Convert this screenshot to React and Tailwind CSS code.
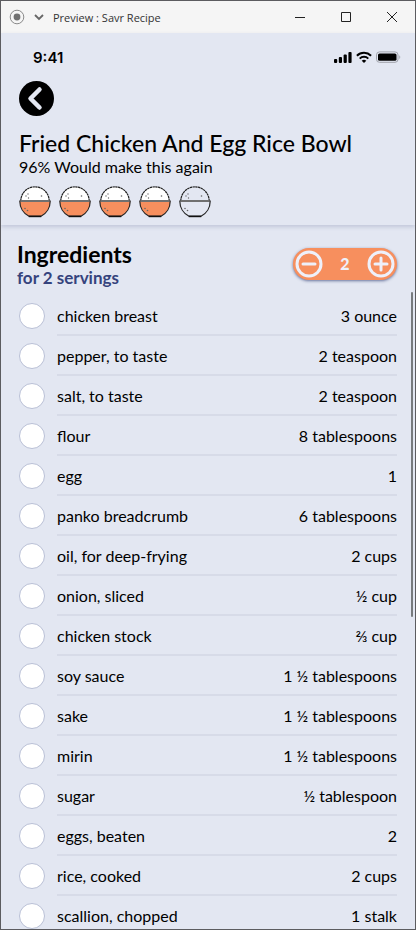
import { useState } from 'react'

const INGREDIENTS = [
  { name: 'chicken breast', amount: '3 ounce' },
  { name: 'pepper, to taste', amount: '2 teaspoon' },
  { name: 'salt, to taste', amount: '2 teaspoon' },
  { name: 'flour', amount: '8 tablespoons' },
  { name: 'egg', amount: '1' },
  { name: 'panko breadcrumb', amount: '6 tablespoons' },
  { name: 'oil, for deep-frying', amount: '2 cups' },
  { name: 'onion, sliced', amount: '½ cup' },
  { name: 'chicken stock', amount: '⅔ cup' },
  { name: 'soy sauce', amount: '1 ½ tablespoons' },
  { name: 'sake', amount: '1 ½ tablespoons' },
  { name: 'mirin', amount: '1 ½ tablespoons' },
  { name: 'sugar', amount: '½ tablespoon' },
  { name: 'eggs, beaten', amount: '2' },
  { name: 'rice, cooked', amount: '2 cups' },
  { name: 'scallion, chopped', amount: '1 stalk' },
]

function TitleBar() {
  return (
    <div className="flex h-8 shrink-0 items-center bg-[#f5f5f5] font-['Open_Sans',sans-serif] text-[#333]">
      <svg className="ml-2 size-4" viewBox="0 0 16 16" fill="none">
        <circle cx="8" cy="8" r="6.8" stroke="#8a8a8a" />
        <circle cx="8" cy="8" r="3.4" fill="#707070" />
      </svg>
      <svg className="ml-2 size-3" viewBox="0 0 12 12" fill="none" stroke="#666" strokeWidth="1.8">
        <path d="M2 4 6 8 10 4" />
      </svg>
      <span className="ml-2 pt-[2px] text-[11px]">Preview : Savr Recipe</span>
      <div className="ml-auto flex">
        <button aria-label="Minimize" className="flex h-8 w-[46px] items-center justify-center">
          <svg className="size-3" viewBox="0 0 12 12" stroke="#222">
            <path d="M1 6.5h10" />
          </svg>
        </button>
        <button aria-label="Maximize" className="flex h-8 w-[46px] items-center justify-center">
          <svg className="size-3" viewBox="0 0 12 12" fill="none" stroke="#222">
            <path d="M1.5 1.5h9v9h-9z" />
          </svg>
        </button>
        <button aria-label="Close" className="flex h-8 w-[46px] items-center justify-center">
          <svg className="size-3" viewBox="0 0 12 12" stroke="#222">
            <path d="m1 1 10 10M11 1 1 11" />
          </svg>
        </button>
      </div>
    </div>
  )
}

function StatusBar() {
  return (
    <div className="flex h-12 items-center justify-between pr-[14px] pl-8">
      <span className="pt-[2px] font-['Inter',sans-serif] text-[15px] font-semibold">9:41</span>
      <div className="flex items-center gap-1">
        <svg className="h-3 w-[18px]" viewBox="0 0 18 12">
          <rect x="0" y="8" width="3.2" height="4" rx="1" />
          <rect x="4.8" y="6" width="3.2" height="6" rx="1" />
          <rect x="9.6" y="3.4" width="3.2" height="8.6" rx="1" />
          <rect x="14.4" y="1" width="3.2" height="11" rx="1" />
        </svg>
        <svg className="h-3 w-4" viewBox="0 0 16 12" fill="none" stroke="#000" strokeWidth="2">
          <path d="M.9 4.7a10.3 10.3 0 0 1 14.2 0" />
          <path d="M3.7 7.6a6.2 6.2 0 0 1 8.6 0" />
          <path d="M8 12 5.7 9.7a3.4 3.4 0 0 1 4.6 0z" fill="#000" stroke="none" />
        </svg>
        <svg className="h-3 w-[25px]" viewBox="0 0 25 12" fill="none">
          <rect x=".5" y=".9" width="21.5" height="10.4" rx="3" stroke="#a0a3ab" />
          <rect x="2" y="2.4" width="18.5" height="7.4" rx="1.6" fill="#000" />
          <path d="M23.3 4.3v3.6c1.3-.5 1.3-3.1 0-3.6z" fill="#a0a3ab" />
        </svg>
      </div>
    </div>
  )
}

function RiceBowl({ filled }) {
  return (
    <svg className="size-8" viewBox="0 0 32 32" fill="none" stroke="#222" strokeWidth="1.2">
      <path d="M1.8 15a14.2 14.2 0 0 1 28.4 0z" fill={filled ? '#fff' : 'none'} strokeDasharray="2.4 .4" />
      <path
        d="M.8 15h30.4c0 6.500-3.500 12.500-9.200 15.200H10C4.300 27.500.8 21.500.8 15z"
        fill={filled ? '#f78f5e' : 'none'}
      />
      <path d="M1.400 15h29.200" stroke="#707070" strokeWidth="2" />
      <path d="M9.800 30.500h12.400" stroke="#111" strokeWidth="1.400" />
      <g fill="#666" stroke="none">
        <circle cx="9" cy="8" r=".7" />
        <circle cx="7" cy="10" r=".7" />
        <circle cx="9.500" cy="12" r=".7" />
        <circle cx="22.500" cy="10" r=".8" />
        <circle cx="6" cy="22.500" r=".8" />
        <circle cx="8.500" cy="24.500" r=".8" />
      </g>
    </svg>
  )
}

function Stepper({ value, onChange }) {
  return (
    <div className="flex h-8 w-[104px] items-center justify-between rounded-full bg-[#f78f5e] px-[2px] text-[#eef0fa] shadow-[0_1px_3px_rgba(50,65,120,0.7)]">
      <button aria-label="Fewer servings" onClick={() => onChange(Math.max(1, value - 1))}>
        <svg className="size-7" viewBox="0 0 28 28" fill="none" stroke="currentColor" strokeWidth="3" strokeLinecap="round">
          <circle cx="14" cy="14" r="12" />
          <path d="M8 14h12" />
        </svg>
      </button>
      <span className="text-base font-black">{value}</span>
      <button aria-label="More servings" onClick={() => onChange(value + 1)}>
        <svg className="size-7" viewBox="0 0 28 28" fill="none" stroke="currentColor" strokeWidth="3" strokeLinecap="round">
          <circle cx="14" cy="14" r="12" />
          <path d="M8 14h12M14 8v12" />
        </svg>
      </button>
    </div>
  )
}

function IngredientRow({ name, amount }) {
  return (
    <li>
      <label className="flex h-10 items-center gap-3">
        <input
          type="checkbox"
          className="size-[26px] shrink-0 appearance-none rounded-full border border-[#b9c0d6] bg-white checked:bg-[#f78f5e]"
        />
        <span className="flex h-10 flex-1 items-center justify-between border-b-2 border-[#d7dbe8] pt-[2px]">
          <span>{name}</span>
          <span>{amount}</span>
        </span>
      </label>
    </li>
  )
}

export default function App() {
  const [servings, setServings] = useState(2)

  return (
    <div className="flex h-screen flex-col overflow-hidden border border-[#5c5c60] bg-[#e3e7f2] font-['Lato',sans-serif] text-base text-black">
      <TitleBar />

      <header className="shrink-0 pb-[7px] shadow-[0_2px_4px_rgba(60,75,120,0.2)]">
        <StatusBar />
        <div className="px-[18px]">
          <button aria-label="Back" className="block">
            <svg className="size-[35px]" viewBox="0 0 35 35" fill="none">
              <circle cx="17.500" cy="17.500" r="17.500" fill="#000" />
              <path d="M20.500 8.500 11.500 17.500 20.500 26.500" stroke="#e3e7f2" strokeWidth="4.500" strokeLinecap="round" strokeLinejoin="round" />
            </svg>
          </button>
          <h1 className="mt-3 text-[23px] leading-[30px] font-medium">Fried Chicken And Egg Rice Bowl</h1>
          <p className="leading-[18px]">96% Would make this again</p>
          <div className="mt-[10px] flex gap-2" role="img" aria-label="4 out of 5 bowls">
            {[1, 2, 3, 4, 5].map((n) => (
              <RiceBowl key={n} filled={n <= 4} />
            ))}
          </div>
        </div>
      </header>

      <main className="relative min-h-0 flex-1 overflow-hidden pr-[18px] pl-4">
        <div className="flex items-center justify-between pt-[15px]">
          <div>
            <h2 className="text-[23px] leading-7 font-bold">Ingredients</h2>
            <p className="text-[17px] leading-5 font-bold text-[#35437d]">for {servings} servings</p>
          </div>
          <Stepper value={servings} onChange={setServings} />
        </div>
        <ul className="mt-2 pl-[2px]">
          {INGREDIENTS.map((item) => (
            <IngredientRow key={item.name} name={item.name} amount={item.amount} />
          ))}
        </ul>
        <div className="absolute top-[67px] right-[2px] h-[325px] w-[2px] rounded-full bg-[#777b7e]" />
      </main>
    </div>
  )
}
